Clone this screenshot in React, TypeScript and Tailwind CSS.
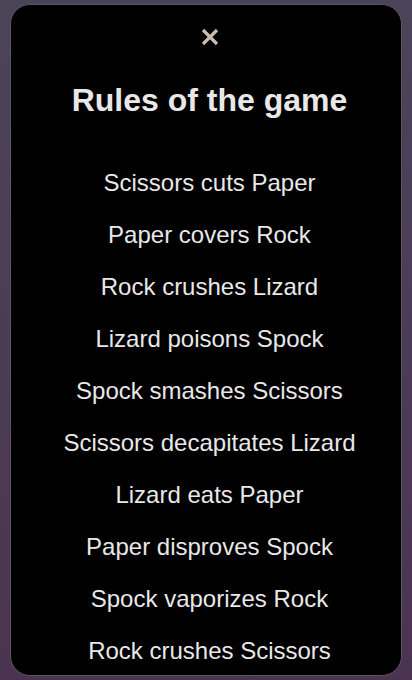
const rules = [
  "Scissors cuts Paper",
  "Paper covers Rock",
  "Rock crushes Lizard",
  "Lizard poisons Spock",
  "Spock smashes Scissors",
  "Scissors decapitates Lizard",
  "Lizard eats Paper",
  "Paper disproves Spock",
  "Spock vaporizes Rock",
  "Rock crushes Scissors",
];

const CloseIcon = () => (
  <svg width="18" height="18" viewBox="0 0 18 18" aria-hidden="true">
    <path
      d="M2 2L16 16M16 2L2 16"
      stroke="#c8bcae"
      strokeWidth="3.2"
      strokeLinecap="butt"
    />
  </svg>
);

export default function App() {
  return (
    <div className="h-[680px] w-[412px] overflow-hidden bg-gradient-to-b from-[#4b4459] to-[#4b3451] px-[10px] pt-[4px] pb-[4px] font-['Liberation_Sans',Arial,sans-serif]">
      <div className="flex h-[672px] flex-col items-center rounded-[20px] border border-[#5a5560] bg-black pt-[23px] pl-[7px] text-[#e8e8e8]">
        <button className="flex h-[18px] w-[18px] items-center justify-center">
          <CloseIcon />
        </button>
        <h1 className="mt-[36px] text-[32px] font-bold leading-[37px]">
          Rules of the game
        </h1>
        <ul className="mt-[50px] flex flex-col items-center gap-6">
          {rules.map((rule) => (
            <li key={rule} className="text-2xl leading-7">
              {rule}
            </li>
          ))}
        </ul>
      </div>
    </div>
  );
}
